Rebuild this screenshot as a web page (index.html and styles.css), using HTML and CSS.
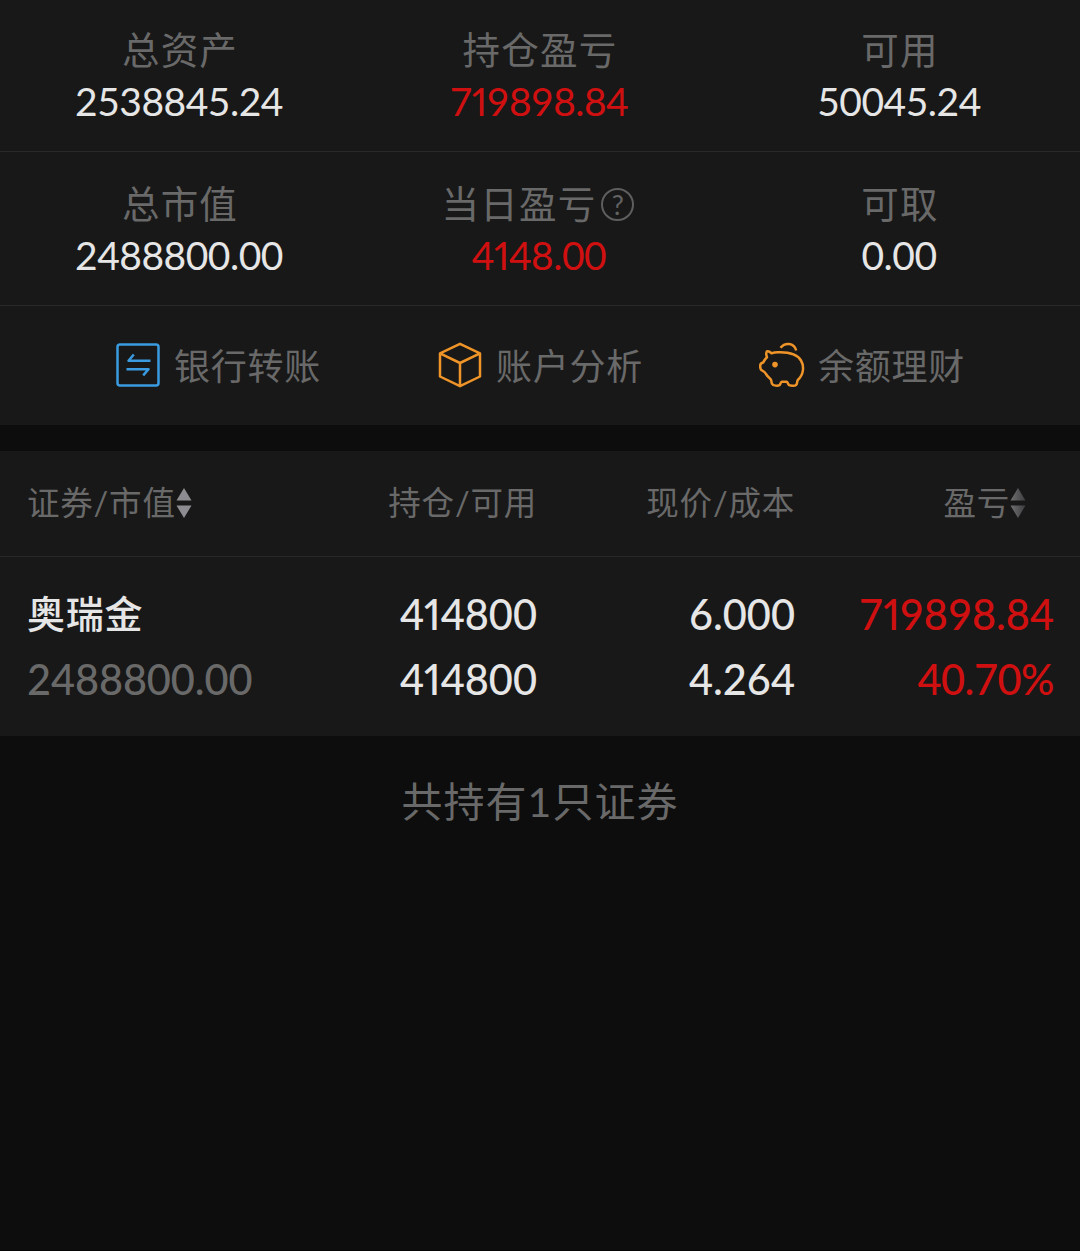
FILE: index.html
```html
<!DOCTYPE html>
<html lang="zh-CN">
<head>
<meta charset="utf-8">
<title>持仓</title>
<link rel="stylesheet" href="styles.css">
</head>
<body>
<main class="page">
  <section class="summary">
    <div class="metric"><div class="label">总资产</div><div class="value">2538845.24</div></div>
    <div class="metric"><div class="label">持仓盈亏</div><div class="value up">7<span class="one">1</span>9898.84</div></div>
    <div class="metric"><div class="label">可用</div><div class="value">50045.24</div></div>
  </section>
  <section class="summary">
    <div class="metric"><div class="label">总市值</div><div class="value">2488800.00</div></div>
    <div class="metric"><div class="label with-help">当日盈亏<span class="help">?</span></div><div class="value up">4<span class="one">1</span>48.00</div></div>
    <div class="metric"><div class="label">可取</div><div class="value">0.00</div></div>
  </section>
  <nav class="actions">
    <a class="action">
      <svg class="icon blue" viewBox="0 0 46 46"><rect x="2.5" y="2.5" width="41" height="41" rx="2.5"/><path d="M35.500 18.700H13.500L18.800 12.500M11.500 27.200H33.500L28.200 33.400"/></svg>
      <span>银行转账</span>
    </a>
    <a class="action">
      <svg class="icon orange" viewBox="0 0 46 46"><path d="M23 1.8L43 11.4V34.5L23 44.2L3 34.5V11.4ZM3 11.4L23 21L43 11.4M23 21V44"/></svg>
      <span>账户分析</span>
    </a>
    <a class="action">
      <svg class="icon orange" viewBox="0 0 46 46"><path d="M21.500 5.800C26 .2 35 .5 37.200 8.500M12.500 11.200C10.500 9.500 9 9 7.800 9.500C6.800 11.500 7.500 14 8 15.200C6.500 16.500 5 18.500 4.200 20.500C2 21 1 22.300 1.200 24.500C1.200 26.500 1.800 28.200 3.700 28.800C5.500 29.500 6 30 7 32C8.500 34.500 10.500 36 12 37.800C12.600 39 12.300 40.700 13 41.800C14 44 19 44 20.500 43.200C21.500 42.200 21.500 40.200 23 39.800H27.500C29 40.200 29 42.500 30.200 43.200C32 44 36 44 37.200 42.800C38.500 41.500 37.800 39.500 38.800 38C44.500 33 45.500 24.500 42 18.500C38 11.500 29 10 19 10.300C16.500 10.400 14.500 10.700 12.500 11.200Z"/><circle cx="16" cy="22.600" r="2.800" class="eye"/></svg>
      <span>余额理财</span>
    </a>
  </nav>
  <section class="holdings">
    <div class="row head">
      <div class="sortable"><span>证券/市值</span><svg class="sort" viewBox="0 0 16 32"><path d="M8 1L15.500 13.500H.5ZM.5 18.500H15.500L8 31Z" fill="#8d8d91"/></svg></div>
      <div><span>持仓/可用</span></div>
      <div><span>现价/成本</span></div>
      <div class="sortable profit"><span>盈亏</span><svg class="sort" viewBox="0 0 16 32"><defs><linearGradient id="fade"><stop stop-color="#707072"/><stop offset="1" stop-color="#3d3d3f"/></linearGradient></defs><path d="M8 1L15.500 13.500H.5ZM.5 18.500H15.500L8 31Z" fill="url(#fade)"/></svg></div>
    </div>
    <div class="row item">
      <div class="name">奥瑞金</div><div class="qty">4<span class="one">1</span>4800</div><div>6.000</div><div class="up">7<span class="one">1</span>9898.84</div>
      <div class="muted">2488800.00</div><div class="qty">4<span class="one">1</span>4800</div><div>4.264</div><div class="up percent">40.70%</div>
    </div>
  </section>
  <p class="total">共持有1只证券</p>
</main>
</body>
</html>
```

FILE: styles.css
```css
* { box-sizing: border-box; }
body {
  margin: 0;
  background: #0d0d0d;
  color: #e6e6e6;
  font-family: Lato, "Noto Sans CJK SC", sans-serif;
}
.page { min-height: 1251px; border-bottom: 1px solid #050505; }
.one { font-variant-numeric: proportional-nums; }
.summary {
  display: grid;
  grid-template-columns: repeat(3, 1fr);
  background: #181818;
  border-bottom: 1px solid #292929;
  height: 152px;
  padding-top: 24px;
}
.summary + .summary { height: 154px; padding-top: 26px; }
.metric { text-align: center; }
.label {
  display: flex;
  justify-content: center;
  align-items: center;
  height: 52px;
  font-size: 37.5px;
  letter-spacing: 1.2px;
  line-height: 52px;
  color: #696969;
}
.with-help { padding-right: 4px; }
.help {
  width: 33px;
  height: 33px;
  margin-left: 5px;
  border: 2px solid #5e5e5e;
  border-radius: 50%;
  font: 27px/29px Lato, sans-serif;
  letter-spacing: 0;
  color: #626262;
}
.value { height: 52px; font-size: 39px; line-height: 50px; letter-spacing: -.5px; padding-right: 2px; }
.up { color: #d01010; }
.actions {
  display: grid;
  grid-template-columns: repeat(3, 322px);
  justify-content: center;
  height: 119px;
  background: #181818;
}
.action { display: flex; align-items: center; justify-content: center; gap: 13px; font-size: 36px; line-height: 50px; letter-spacing: .8px; color: #696969; }
.icon { width: 46px; height: 46px; margin-bottom: 1px; fill: none; stroke-width: 2.5; stroke-linejoin: round; }
.blue { stroke: #3a9be0; }
.orange { stroke: #ee9428; }
.eye { fill: #ee9428; stroke: none; }
.holdings { margin-top: 26px; background: #181818; }
.row { display: grid; grid-template-columns: 252px 258px 258px 259px; padding: 0 26px 0 27px; text-align: right; }
.head { height: 106px; border-bottom: 1px solid #292929; align-items: center; font-size: 32.5px; line-height: 46px; letter-spacing: .8px; color: #696969; }
.head span { display: inline-block; padding-bottom: 1px; }
.sortable { display: flex; align-items: center; }
.profit { justify-content: flex-end; padding-right: 28px; }
.sort { width: 16px; height: 32px; margin: 0 0 2px; }
.item { height: 179px; padding-top: 25px; grid-auto-rows: 65px; font-size: 41.5px; line-height: 65px; font-weight: 500; letter-spacing: 0; align-content: start; }
.row > :first-child, .name, .muted { text-align: left; }
.name { font-size: 38px; letter-spacing: .8px; line-height: 63px; }
.muted { color: #696969; letter-spacing: -.1px; }
.percent { letter-spacing: -.5px; }
.total { margin: 0; padding-top: 35px; font-size: 41px; line-height: 62px; letter-spacing: 1px; text-align: center; color: #696969; }
```
